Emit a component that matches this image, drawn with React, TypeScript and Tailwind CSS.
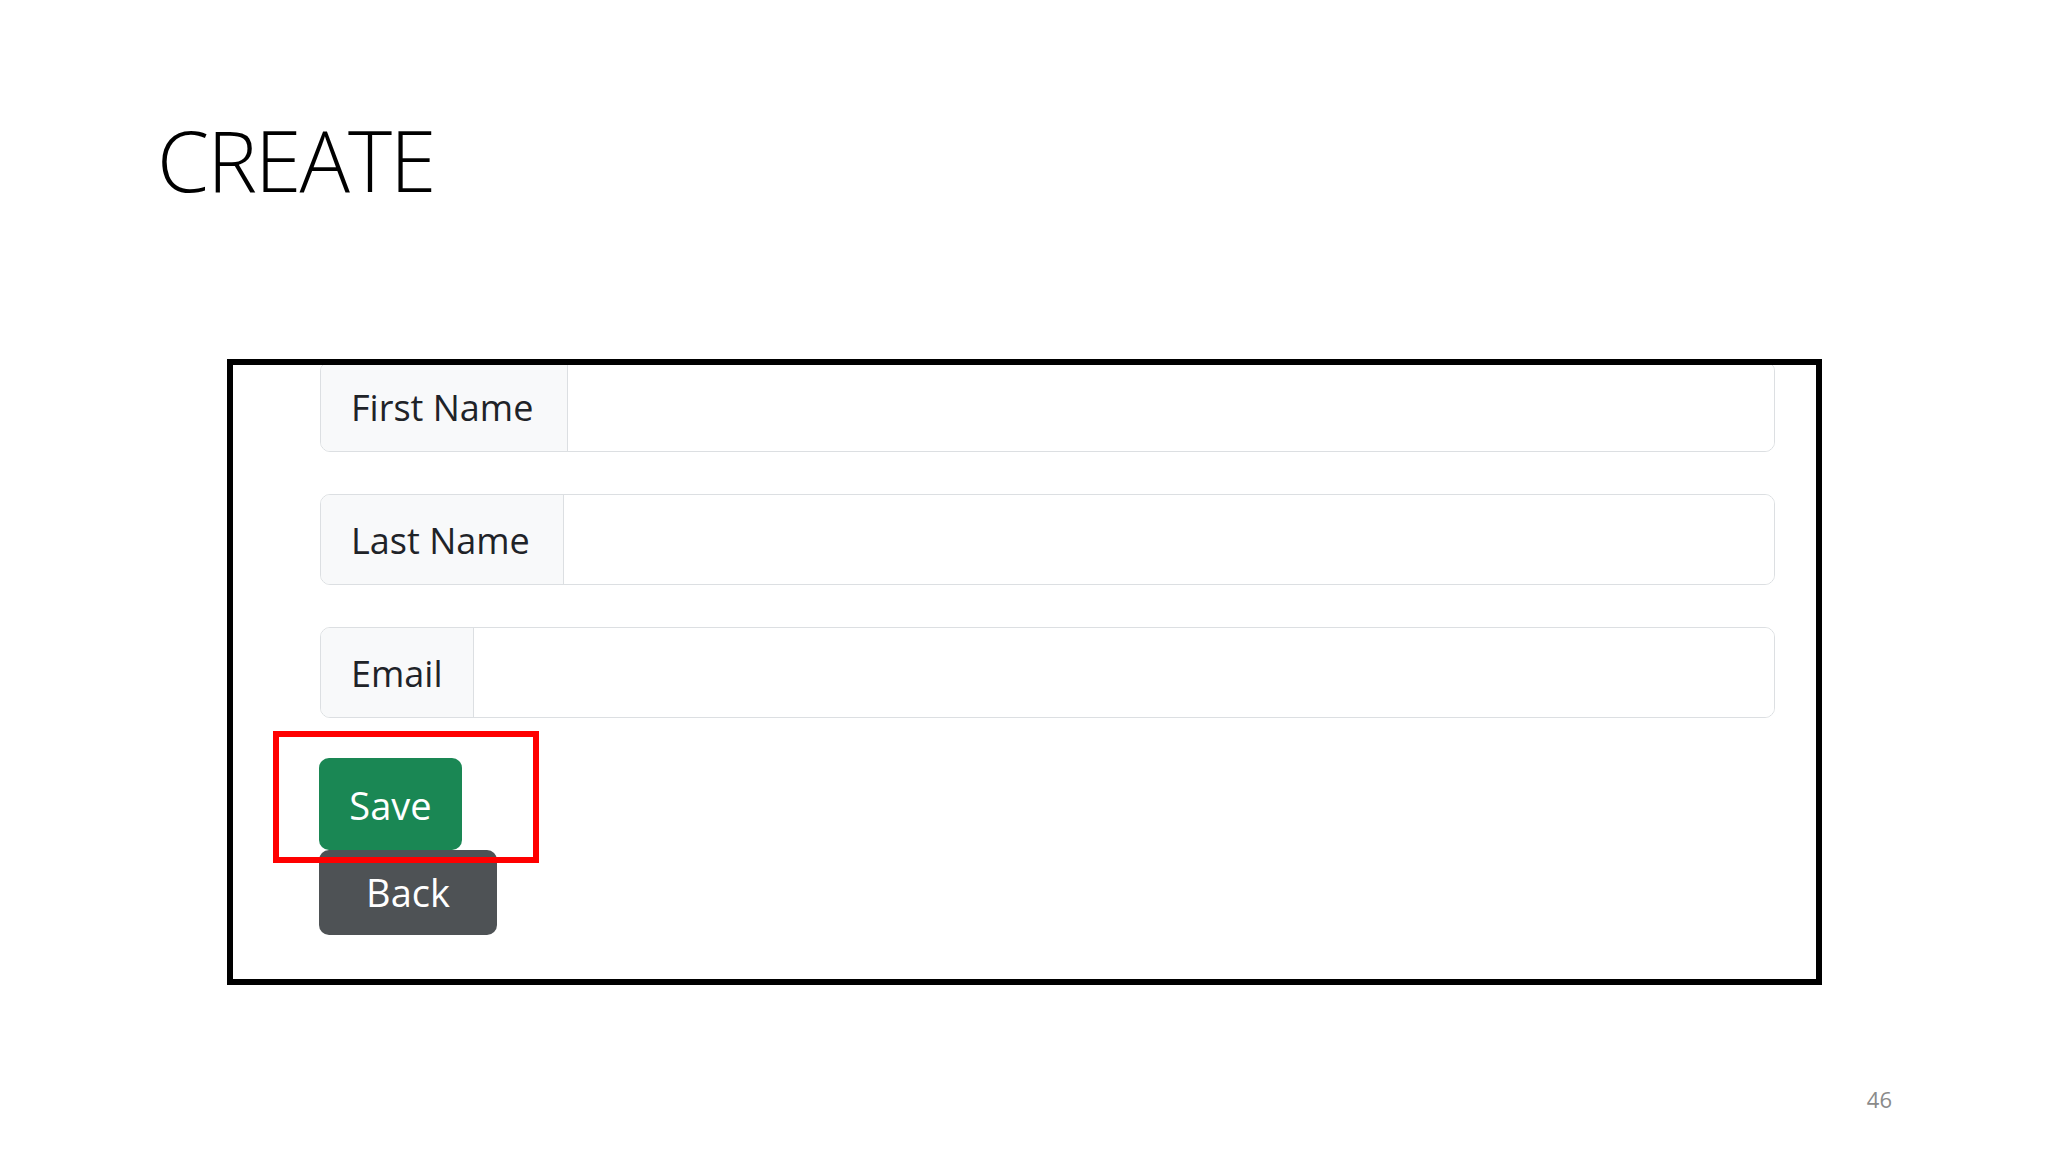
import React from "react";

const font = { fontFamily: '"Open Sans", "Noto Sans", sans-serif' };

function Field({ label, w }: { label: string; w: string }) {
  return (
    <div className="flex h-[91px] w-[1455px] rounded-[10px] border border-[#dcdfe2] overflow-hidden">
      <div className={`${w} flex items-center bg-[#f8f9fa] border-r border-[#dcdfe2] pl-[30px] pt-[3px] text-[36px] text-[#1f2328]`}>
        {label}
      </div>
      <div className="flex-1 bg-white" />
    </div>
  );
}

export default function App() {
  return (
    <div className="w-[2048px] h-[1152px] bg-white relative overflow-hidden" style={font}>
      <div className="pt-[118px] pl-[157px]">
        <h1 className="text-[84px] font-light leading-none tracking-[-2px] text-black">CREATE</h1>
      </div>
      <div className="ml-[227px] mt-[157px] w-[1595px] h-[626px] border-[6px] border-black relative overflow-hidden">
        <div className="pl-[87px] -mt-[4px] flex flex-col gap-[42px]">
          <Field label="First Name" w="w-[247px]" />
          <Field label="Last Name" w="w-[243px]" />
          <Field label="Email" w="w-[153px]" />
        </div>
        <div className="pl-[86px] mt-[40px] flex flex-col items-start">
          <button className="w-[143px] h-[92px] rounded-[10px] bg-[#1a8754] text-white text-[38px] pt-[3px] flex items-center justify-center">
            Save
          </button>
          <button className="w-[178px] h-[85px] rounded-[10px] bg-[#4e5255] text-white text-[38px] flex items-center justify-center">
            Back
          </button>
        </div>
        <div className="absolute left-[40px] top-[366px] w-[266px] h-[132px] border-[6px] border-[#ff0000]" />
      </div>
      <div className="flex justify-end pr-[156px] mt-[103px]">
        <span className="text-[22px] leading-none text-[#8a8a8a]">46</span>
      </div>
    </div>
  );
}
